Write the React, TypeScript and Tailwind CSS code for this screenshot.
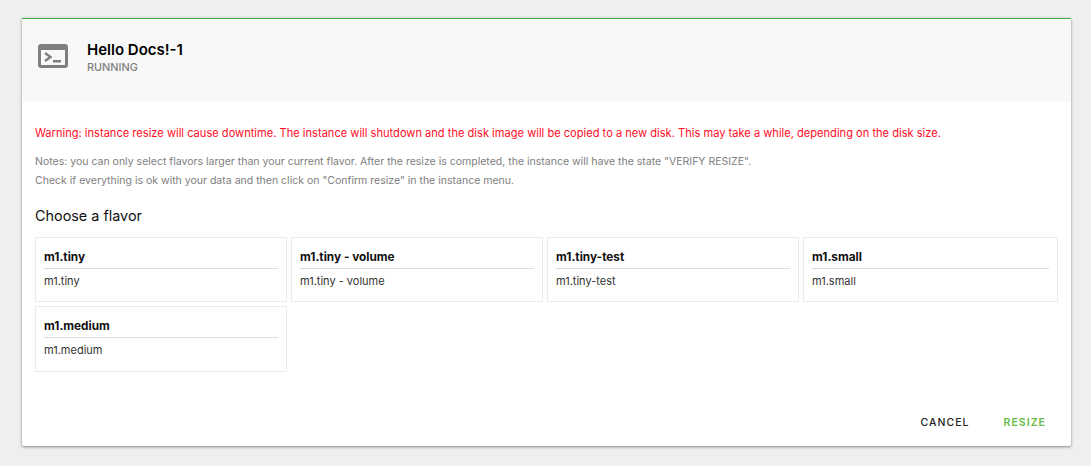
const flavors = ['m1.tiny', 'm1.tiny - volume', 'm1.tiny-test', 'm1.small', 'm1.medium'];

function TerminalIcon() {
  return (
    <svg width="30" height="24" viewBox="0 0 30 24" className="block">
      <path
        fillRule="evenodd"
        fill="#7f7f7f"
        d="M3 0h24a3 3 0 0 1 3 3v18a3 3 0 0 1-3 3H3a3 3 0 0 1-3-3V3a3 3 0 0 1 3-3zM3 6v15h24V6z"
      />
      <path d="M7 9l5.500 4L7 17" fill="none" stroke="#7f7f7f" strokeWidth="2.400" />
      <rect x="15" y="16" width="8" height="2.500" fill="#7f7f7f" />
    </svg>
  );
}

export default function App() {
  return (
    <div className="h-[466px] overflow-hidden bg-[#efefef] pt-[18px] pl-[22px] pr-5 font-['Inter',sans-serif]">
      <div className="h-[428px] w-[1049px] rounded-b-[2px] border-t border-[#3fb13f] bg-white shadow-[0_1px_3px_rgba(0,0,0,0.45)] flex flex-col">
        <div className="h-[83px] bg-[#f8f8f8] flex items-start pl-4 pt-[21px]">
          <div className="pt-[4px]">
            <TerminalIcon />
          </div>
          <div className="ml-[19px]">
            <div className="text-[15px] leading-5 font-semibold text-black">Hello Docs!-1</div>
            <div className="text-[10.900px] leading-[14px] font-medium text-[#7f7f7f]">RUNNING</div>
          </div>
        </div>

        <div className="flex-1 px-[13px] pt-[23px]">
          <p className="text-[11.100px] leading-4 text-[#ff0d1f]">
            Warning: instance resize will cause downtime. The instance will shutdown and the disk image will be copied to a new disk. This may take a while, depending on the disk size.
          </p>
          <div className="mt-[11px] text-[10.530px] leading-[19px] text-[#808080]">
            <p>Notes: you can only select flavors larger than your current flavor. After the resize is completed, the instance will have the state "VERIFY RESIZE".</p>
            <p>Check if everything is ok with your data and then click on "Confirm resize" in the instance menu.</p>
          </div>
          <h2 className="mt-[16px] text-[14.400px] leading-5 font-normal text-[#111111]">Choose a flavor</h2>

          <div className="mt-[11px] grid grid-cols-[252px_252px_252px_255px] grid-rows-[65px_66px] gap-x-1 gap-y-1">
            {flavors.map((name) => (
              <div key={name} className="border border-[#ebebeb] px-2 pt-[11px]">
                <div className="border-b border-[#dddddd] pb-[2px] text-[11.800px] leading-[17px] font-bold text-[#111111]">{name}</div>
                <div className="pt-[4px] text-[11px] leading-4 text-[#333333]">{name}</div>
              </div>
            ))}
          </div>
        </div>

        <div className="flex justify-end gap-[34px] pr-[25px] pb-[15px] text-[10.500px] leading-4 font-medium tracking-[0.1em]">
          <button type="button" className="text-[#222222]">CANCEL</button>
          <button type="button" className="font-semibold text-[#66bb44]">RESIZE</button>
        </div>
      </div>
    </div>
  );
}
